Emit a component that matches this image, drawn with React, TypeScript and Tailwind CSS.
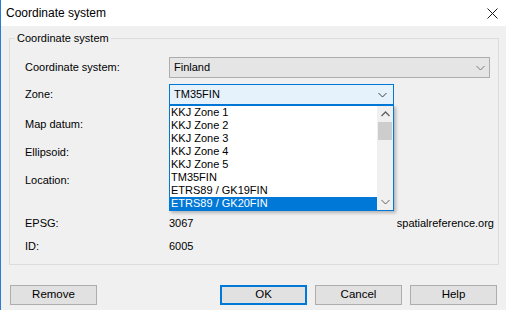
import React from "react";

const font = { fontFamily: '"Liberation Sans", Arial, sans-serif' };

function Chevron({ color = "#606060" }: { color?: string }) {
  return (
    <svg width="9" height="6" viewBox="0 0 9 6">
      <path d="M0.5 1 L4.5 5 L8.5 1" fill="none" stroke={color} strokeWidth="1" />
    </svg>
  );
}

function ChevronUp({ color = "#606060" }: { color?: string }) {
  return (
    <svg width="9" height="6" viewBox="0 0 9 6">
      <path d="M0.5 5 L4.5 1 L8.5 5" fill="none" stroke={color} strokeWidth="1.3" />
    </svg>
  );
}

const items = [
  "KKJ Zone 1",
  "KKJ Zone 2",
  "KKJ Zone 3",
  "KKJ Zone 4",
  "KKJ Zone 5",
  "TM35FIN",
  "ETRS89 / GK19FIN",
  "ETRS89 / GK20FIN",
];

function Button({ label, primary }: { label: string; primary?: boolean }) {
  return (
    <div
      className={`w-[87px] h-[20px] flex items-center justify-center text-[11.5px] text-black bg-[#e1e1e1] ${
        primary ? "border-2 border-[#0078d7]" : "border border-[#adadad]"
      }`}
    >
      {label}
    </div>
  );
}

export default function App() {
  return (
    <div
      className="w-[506px] h-[310px] flex flex-col bg-[#f0f0f0] border-l border-[#2b7bd4] overflow-hidden text-black"
      style={font}
    >
      {/* Title bar */}
      <div className="h-[26px] bg-white flex items-center justify-between pl-[5px] pr-[8px]">
        <span className="text-[12px]">Coordinate system</span>
        <svg width="11" height="11" viewBox="0 0 11 11">
          <path d="M0.5 0.5 L10.5 10.5 M10.5 0.5 L0.5 10.5" stroke="#1a1a1a" strokeWidth="1" />
        </svg>
      </div>

      {/* Group box */}
      <div className="ml-[8px] mr-[7px] mt-[12px] h-[227px] border border-[#dcdcdc] relative">
        <span className="absolute -top-[8px] left-[5px] px-[2px] bg-[#f0f0f0] text-[11px] leading-[14px]">
          Coordinate system
        </span>
        <div className="pt-[18px] pl-[15px] pr-[8px] flex flex-col text-[11px]">
          {/* Row 1 */}
          <div className="grid grid-cols-[144px_1fr] h-[21px] items-center">
            <span>Coordinate system:</span>
            <div className="h-[21px] border border-[#adadad] bg-[#e5e5e5] flex items-center justify-between pl-[4px] pr-[4px]">
              <span>Finland</span>
              <Chevron color="#7a7a7a" />
            </div>
          </div>
          {/* Row 2 */}
          <div className="grid grid-cols-[144px_1fr] h-[21px] items-center mt-[6px]">
            <span>Zone:</span>
            <div className="relative w-[225px] h-[21px]">
              <div className="h-[21px] border border-[#0078d7] bg-[#e5f1fb] flex items-center justify-between pl-[4px] pr-[6px]">
                <span>TM35FIN</span>
                <Chevron color="#404040" />
              </div>
              {/* Dropdown list */}
              <div className="absolute top-[21px] left-0 w-[225px] h-[106px] border border-[#0078d7] bg-white z-10 flex shadow-[2px_2px_3px_rgba(0,0,0,0.25)]">
                <div className="flex-1 flex flex-col">
                  {items.map((it, i) => (
                    <div
                      key={it}
                      className={`h-[13px] leading-[13px] pl-[1px] text-[11px] ${
                        i === items.length - 1 ? "bg-[#0078d7] text-white" : "text-black"
                      }`}
                    >
                      {it}
                    </div>
                  ))}
                </div>
                <div className="w-[16px] bg-[#f0f0f0] flex flex-col items-center">
                  <div className="h-[16px] flex items-center justify-center">
                    <ChevronUp color="#606060" />
                  </div>
                  <div className="w-[14px] h-[18px] bg-[#cdcdcd]" />
                  <div className="flex-1" />
                  <div className="h-[16px] flex items-center justify-center">
                    <Chevron color="#606060" />
                  </div>
                </div>
              </div>
            </div>
          </div>
          {/* Rows 3-5 */}
          <div className="h-[28px] flex items-center mt-[5px]">Map datum:</div>
          <div className="h-[28px] flex items-center">Ellipsoid:</div>
          <div className="h-[28px] flex items-center">Location:</div>
          {/* EPSG */}
          <div className="grid grid-cols-[144px_1fr_auto] h-[23px] items-center mt-[18px] -mr-[4px]">
            <span>EPSG:</span>
            <span>3067</span>
            <span>spatialreference.org</span>
          </div>
          <div className="grid grid-cols-[144px_1fr] h-[23px] items-center">
            <span>ID:</span>
            <span>6005</span>
          </div>
        </div>
      </div>

      {/* Buttons */}
      <div className="mt-[20px] pl-[9px] pr-[9px] flex items-center">
        <Button label="Remove" />
        <div className="flex-1" />
        <div className="flex gap-[8px]">
          <Button label="OK" primary />
          <Button label="Cancel" />
          <Button label="Help" />
        </div>
      </div>
    </div>
  );
}
